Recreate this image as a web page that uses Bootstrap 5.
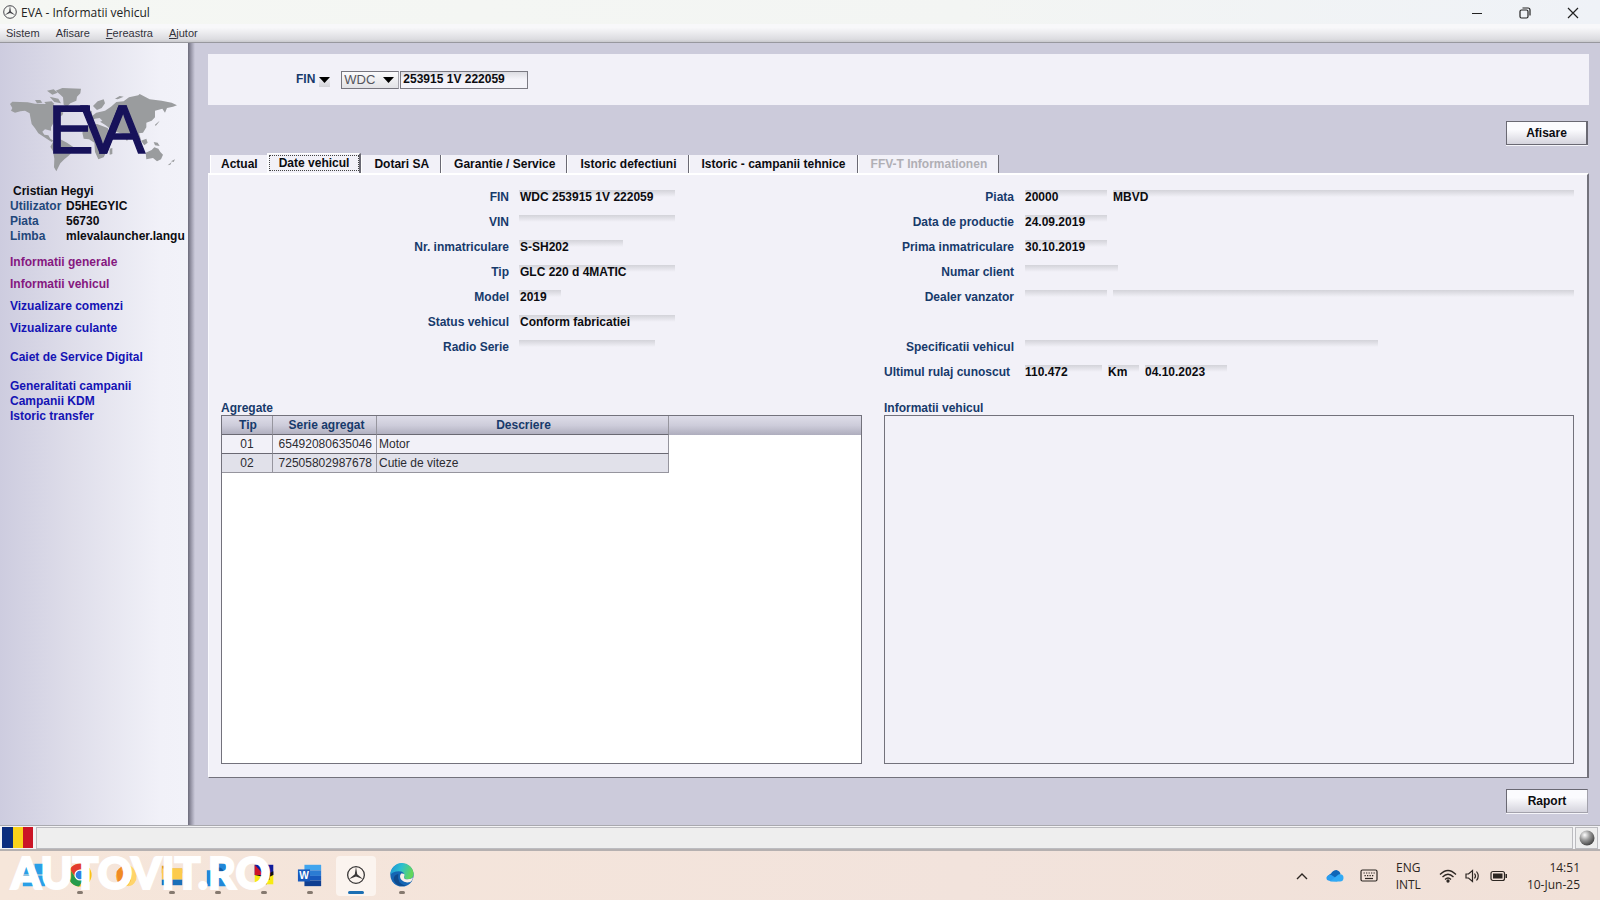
<!DOCTYPE html>
<html lang="ro">
<head>
<meta charset="utf-8">
<meta name="viewport" content="width=device-width, initial-scale=1">
<title>EVA - Informatii vehicul</title>
<link href="https://cdn.jsdelivr.net/npm/bootstrap@5.3.0/dist/css/bootstrap.min.css" rel="stylesheet">
<style>
  :root { --navy:#173a6b; --panel:#f2f1f8; --lilac:#cccbdb; --edge:#73727c; }
  body { font-family:"Liberation Sans",Arial,sans-serif; font-size:12px; line-height:15px; color:#0c0c10; background:var(--lilac); }
  button, input, select { font-family:inherit; font-size:12px; color:inherit; border-radius:0; }
  .ui-font { font-family:"Open Sans","Noto Sans",sans-serif; }

  .title-bar { height:24px; background:linear-gradient(90deg,#f5f7f3,#f3f5f3 60%,#eff2f7); padding-left:3px; color:#222; }
  .win-btn { width:48px; height:24px; border:0; background:none; padding:0; }
  .menu-bar { height:19px; padding-left:6px; gap:16px; background:linear-gradient(#f8f8fa 20%,#dcdce0 85%,#c9c9cd); border-bottom:1px solid #98989e; }
  .menu-bar button { border:0; background:none; padding:0; font-size:11px; line-height:19px; color:#33333b; }

  .side-bar { width:188px; background:linear-gradient(90deg,#cdccdf,#dddce9 35%,#f1f1f8 85%,#f2f2f9); overflow:hidden; }
  .side-edge { width:7px; background:linear-gradient(90deg,#6c6b7b,#a7a6b7 60%,#cccbdb); }
  .world { display:block; margin:37px 0 4px 5px; }
  .user-info { display:grid; grid-template-columns:56px 1fr; padding-left:10px; font-weight:bold; white-space:nowrap; }
  .user-info dt, .user-info dd { margin:0; font-weight:bold; }
  .user-info dt { color:#23477a; }
  .user-name { grid-column:1 / -1; padding-left:3px; }
  .side-links { padding:11px 0 0 10px; font-weight:bold; }
  .side-links a { color:#1413b4; text-decoration:none; display:block; }
  .side-links a.seen { color:#85187f; }
  .g7 { margin-top:7px; } .g14 { margin-top:14px; }

  .work { padding:11px 11px 12px 13px; min-width:0; }
  .search { height:51px; background:var(--panel); padding-left:88px; }
  .search label, .lbl, .box-title, .grid-table th { color:var(--navy); font-weight:bold; }
  .drop { border:0; padding:0; width:11px; height:14px; background:linear-gradient(#f2f1f8 30%,#d3d3d8); }
  .drop svg, .combo svg { display:block; }
  .combo { width:58px; height:18px; position:relative; margin:0 1px 0 11px; }
  .combo select { appearance:none; width:100%; height:100%; padding:0 0 0 2px; font-size:13px; line-height:15px; color:#55555d; border:1px solid #77767f; border-right-color:#a5a5ad; background:linear-gradient(#fafafc,#e2e2e6); }
  .combo svg { position:absolute; right:5px; top:6px; pointer-events:none; }
  .fin-input { width:128px; height:18px; padding:0 2px 1px; font-weight:bold; border:1px solid #7b7a83; background:linear-gradient(#dcdce2,#f4f3f9 45%); }
  .eva-btn { width:82px; height:24px; margin-right:1px; font-weight:bold; border:1px solid #6a6973; border-right-width:2px; background:linear-gradient(#fbfbfe 35%,#d5d4dd); box-shadow:0 1px 0 #f5f5fa; padding:0; }
  .flat-btn { border-right-width:1px; border-color:#6a6973 #a3a2ac #a3a2ac #6a6973; }

  .eva-tabs { height:20px; padding-left:2px; }
  .eva-tabs button { height:18px; line-height:18px; padding:0 11px 0 12px; border:0; border-right:1px solid #6a6973; border-left:1px solid #fff; background:var(--panel); font-weight:bold; white-space:nowrap; }
  .eva-tabs button.picked { height:20px; padding:0 10px 1px 10px; border-right:2px solid #6a6973; border-left:2px solid #fbfbfe; border-top:1px solid #fff; line-height:16px; outline:1px dotted #444; outline-offset:-3px; position:relative; }
  .eva-tabs button.before { border-right:0; padding:0 9px 0 10px; }
  .eva-tabs button:disabled { color:#b0afb5; }

  .sheet { background:var(--panel); border-top:2px solid #fff; border-left:1px solid #fafafe; border-right:2px solid var(--edge); border-bottom:1px solid var(--edge); padding:15px 13px 13px 12px; }
  .halves { display:grid; grid-template-columns:641fr 690fr; column-gap:22px; }
  .field-area { min-height:211px; }
  .f-row { display:flex; height:25px; align-items:flex-start; }
  .f-row .lbl { text-align:right; line-height:14px; white-space:nowrap; margin-right:10px; flex:none; }
  .left-fields .lbl { width:288px; }
  .right-fields .lbl { width:130px; margin-right:11px; }
  .f-row .shift-lbl { width:126px; margin-right:15px; }
  .f-row input { height:14px; line-height:14px; border:0; padding:0 1px; font-weight:bold; background:linear-gradient(#d3d3d9,#f2f1f8 7px); min-width:0; outline:0; }
  .f-row .w-code, .f-row .w-km, .f-row .w-unit, .f-row .w-name { padding:0; }
  .w-full { width:156px; } .w-plate { width:104px; } .w-year { width:42px; } .w-radio { width:136px; }
  .w-code { width:82px; } .w-client { width:93px; } .w-spec { width:353px; } .w-km { width:77px; } .w-unit { width:31px; }
  .gap-in { gap:6px; } .f-row.gap-in .lbl { margin-right:5px; } .f-row.gap-in .shift-lbl { margin-right:9px; }
  .box-title { height:14px; line-height:14px; }
  .list-box { background:#fff; border:1px solid var(--edge); }
  .info-box { background:var(--panel); border:1px solid var(--edge); border-radius:0; resize:none; display:block; width:100%; }
  .head-band { background:linear-gradient(#deddE9,#cdccda 50%,#aeadbd); height:19px; }
  .grid-table { border-collapse:separate; border-spacing:0; width:447px; table-layout:fixed; }
  .grid-table th, .grid-table td { height:19px; line-height:16px; padding:0 2px; border-right:1px solid #96959e; border-bottom:1px solid #6a6973; white-space:nowrap; }
  .grid-table th { text-align:center; line-height:18px; padding-left:4px; }
  .grid-table th:nth-child(2) { padding-left:6px; }
  .grid-table td { background:var(--panel); color:#2b2b31; }
  .grid-table tr:nth-child(2) td { background:#e1e1ea; border-bottom-color:#96959e; }

  .status { height:26px; background:#f3f3f5; border-top:1px solid #a9a9af; border-bottom:2px solid #b5b0b0; padding:1px 2px 1px 2px; }
  .cell { background:#eee; border:1px solid #bcbcc0; height:22px; }
  .task-bar { height:49px; background:linear-gradient(90deg,#f6e6da,#f2e3dc 60%,#f1e1d8); position:relative; color:#2c2622; }
  .apps { padding-left:14px; gap:6px; }
  .app { width:40px; height:40px; border:0; border-radius:4px; background:none; padding:6px 0 0; display:flex; flex-direction:column; align-items:center; gap:3px; }
  .app.on { background:#fbf4ef; }
  .app i { width:6px; height:3px; border-radius:2px; background:#85796f; }
  .app.on i { width:16px; background:#1b6fb3; }
  .app svg { width:26px; height:26px; display:block; }
  .stamp { position:absolute; left:11px; top:0; font:900 43px/44px Lato,sans-serif; color:#fff; -webkit-text-stroke:2px #fff; white-space:nowrap; pointer-events:none; }
  .tray { padding-right:20px; line-height:17px; }
</style>
</head>
<body class="d-flex flex-column min-vh-100">

<svg width="0" height="0" class="position-absolute" aria-hidden="true">
  <symbol id="star" viewBox="0 0 20 20">
    <circle cx="10" cy="10" r="9" fill="none" stroke="currentColor" stroke-width="1.4"/>
    <path d="M10 1 11.3 9.2 17.8 14.5 10 11.5 2.2 14.5 8.7 9.2Z" fill="currentColor"/>
  </symbol>
</svg>

<header>
  <div class="title-bar d-flex align-items-center ui-font">
    <svg width="14" height="14" color="#44444a"><use href="#star"/></svg>
    <span class="ms-1">EVA - Informatii vehicul</span>
    <div class="ms-auto d-flex">
      <button class="win-btn" aria-label="Minimizare"><svg width="12" height="12"><path d="M1 6.5H11" stroke="#222"/></svg></button>
      <button class="win-btn" aria-label="Restaurare"><svg width="12" height="12" fill="none" stroke="#222" stroke-width="1.2"><rect x="1" y="3" width="8" height="8" rx="1.5"/><path d="M3.5 1H9q2 0 2 2V8.500"/></svg></button>
      <button class="win-btn" style="margin-right:3px" aria-label="Inchidere"><svg width="12" height="12"><path d="M1 1 11 11M11 1 1 11" stroke="#222" stroke-width="1.2"/></svg></button>
    </div>
  </div>
  <nav class="menu-bar d-flex">
    <button>Sistem</button><button>Afisare</button><button><u>F</u>ereastra</button><button><u>A</u>jutor</button>
  </nav>
</header>

<div class="d-flex flex-grow-1">
  <aside class="side-bar flex-shrink-0">
    <svg class="world" width="180" height="100" viewBox="0 0 540 300" role="img" aria-label="EVA">
      <g fill="#9a9c9e">
        <path d="M15 72 22 65 68 67 90 71 120 72 145 72 152 84 175 98 172 106 160 112 158 122 146 128 138 142 138 152 120 148 112 155 118 164 130 166 136 176 146 182 140 186 118 172 100 160 90 145 80 132 76 112 74 100 60 92 46 94 30 98 18 92 22 84Z"/>
        <path d="M90 60 106 60 112 68 96 70ZM118 66 140 64 148 72 124 74ZM126 32 146 28 158 38 142 44ZM134 50 160 56 168 70 148 66Z"/>
        <path d="M152 32 172 24 228 26 226 40 216 50 214 62 196 70 186 80 176 74 174 52 166 44Z"/>
        <path d="M146 182 166 178 186 188 206 202 202 216 190 228 178 238 166 250 160 262 154 274 147 262 148 236 144 214 136 200Z"/>
        <path d="M264 78 278 64 296 58 300 70 290 84 276 90 272 86ZM250 98 260 92 262 108 252 108Z"/>
        <path d="M256 112 274 98 300 92 318 80 334 66 356 64 372 52 400 46 404 42 434 58 470 62 500 68 516 76 504 80 486 84 480 98 472 86 450 92 450 112 440 122 424 128 424 142 414 158 402 160 408 180 396 174 388 154 374 164 366 184 354 162 334 156 324 164 310 142 300 134 280 122 262 134 252 132Z"/>
        <path d="M244 138 276 132 308 144 316 164 328 170 314 190 306 212 296 232 280 238 270 216 268 188 252 178 236 176 232 158ZM314 206 322 204 322 222 314 224Z"/>
        <path d="M330 56 344 48 356 50 338 58ZM446 186 458 188 464 198 450 196ZM408 182 424 176 428 188 418 196ZM450 134 464 122 460 128 452 138Z"/>
        <path d="M422 218 440 210 448 202 460 206 466 216 474 224 468 238 456 244 444 234 424 238ZM498 244 510 238 506 246ZM488 256 500 246 496 254Z"/>
      </g>
      <path d="M256 124 270 116 284 114 292 122 276 130 256 134Z" fill="#dddde8"/>
      <text x="130 227 284" y="218" font-family="Liberation Sans,Arial,sans-serif" font-size="204" fill="#17125a" stroke="#17125a" stroke-width="4">EVA</text>
    </svg>
    <dl class="user-info mb-0">
      <dd class="user-name">Cristian Hegyi</dd>
      <dt>Utilizator</dt><dd>D5HEGYIC</dd>
      <dt>Piata</dt><dd>56730</dd>
      <dt>Limba</dt><dd>mlevalauncher.langu</dd>
    </dl>
    <nav class="side-links">
      <a class="seen" href="#">Informatii generale</a>
      <a class="seen g7" href="#">Informatii vehicul</a>
      <a class="g7" href="#">Vizualizare comenzi</a>
      <a class="g7" href="#">Vizualizare culante</a>
      <a class="g14" href="#">Caiet de Service Digital</a>
      <a class="g14" href="#">Generalitati campanii</a>
      <a href="#">Campanii KDM</a>
      <a href="#">Istoric transfer</a>
    </nav>
  </aside>
  <div class="side-edge flex-shrink-0"></div>

  <main class="work flex-grow-1 d-flex flex-column">
    <form class="search d-flex align-items-center" onsubmit="return false">
      <label for="fin">FIN</label>
      <button class="drop ms-1" type="button" aria-label="Tip cautare"><svg width="11" height="14"><path d="M0 4H11L5.500 10Z"/></svg></button>
      <span class="combo"><select aria-label="WMI"><option>WDC</option></select><svg width="11" height="6"><path d="M0 0H11L5.500 6Z"/></svg></span>
      <input class="fin-input" id="fin" value="253915 1V 222059">
    </form>
    <div class="d-flex justify-content-end mt-3 mb-2"><button class="eva-btn">Afisare</button></div>

    <div class="eva-tabs d-flex align-items-end" role="tablist">
      <button class="before" role="tab">Actual</button>
      <button class="picked" role="tab" aria-selected="true">Date vehicul</button>
      <button role="tab">Dotari SA</button>
      <button role="tab">Garantie / Service</button>
      <button role="tab">Istoric defectiuni</button>
      <button role="tab">Istoric - campanii tehnice</button>
      <button role="tab" disabled>FFV-T Informationen</button>
    </div>

    <section class="sheet flex-grow-1 d-flex flex-column">
      <div class="halves field-area">
        <div class="left-fields">
          <div class="f-row"><label class="lbl" for="a1">FIN</label><input id="a1" class="w-full" readonly value="WDC 253915 1V 222059"></div>
          <div class="f-row"><label class="lbl" for="a2">VIN</label><input id="a2" class="w-full" readonly></div>
          <div class="f-row"><label class="lbl" for="a3">Nr. inmatriculare</label><input id="a3" class="w-plate" readonly value="S-SH202"></div>
          <div class="f-row"><label class="lbl" for="a4">Tip</label><input id="a4" class="w-full" readonly value="GLC 220 d 4MATIC"></div>
          <div class="f-row"><label class="lbl" for="a5">Model</label><input id="a5" class="w-year" readonly value="2019"></div>
          <div class="f-row"><label class="lbl" for="a6">Status vehicul</label><input id="a6" class="w-full" readonly value="Conform fabricatiei"></div>
          <div class="f-row"><label class="lbl" for="a7">Radio Serie</label><input id="a7" class="w-radio" readonly></div>
        </div>
        <div class="right-fields">
          <div class="f-row gap-in"><label class="lbl" for="b1">Piata</label><input id="b1" class="w-code" readonly value="20000"><input class="w-name flex-grow-1" aria-label="Nume piata" readonly value="MBVD"></div>
          <div class="f-row"><label class="lbl" for="b2">Data de productie</label><input id="b2" class="w-code" readonly value="24.09.2019"></div>
          <div class="f-row"><label class="lbl" for="b3">Prima inmatriculare</label><input id="b3" class="w-code" readonly value="30.10.2019"></div>
          <div class="f-row"><label class="lbl" for="b4">Numar client</label><input id="b4" class="w-client" readonly></div>
          <div class="f-row gap-in"><label class="lbl" for="b5">Dealer vanzator</label><input id="b5" class="w-code" readonly><input class="w-name flex-grow-1" aria-label="Nume dealer" readonly></div>
          <div class="f-row"></div>
          <div class="f-row"><label class="lbl" for="b6">Specificatii vehicul</label><input id="b6" class="w-spec" readonly></div>
          <div class="f-row gap-in"><label class="lbl shift-lbl" for="b7">Ultimul rulaj cunoscut</label><input id="b7" class="w-km" readonly value="110.472"><input class="w-unit" aria-label="Unitate" readonly value="Km"><input class="w-code" aria-label="Data rulaj" readonly value="04.10.2023"></div>
        </div>
      </div>
      <div class="halves flex-grow-1">
        <div class="d-flex flex-column">
          <div class="box-title">Agregate</div>
          <div class="list-box flex-grow-1">
            <div class="head-band">
              <table class="grid-table">
                <colgroup><col style="width:51px"><col style="width:104px"><col></colgroup>
                <thead><tr><th>Tip</th><th>Serie agregat</th><th>Descriere</th></tr></thead>
                <tbody>
                  <tr><td class="text-center">01</td><td class="text-end pe-1">65492080635046</td><td>Motor</td></tr>
                  <tr><td class="text-center">02</td><td class="text-end pe-1">72505802987678</td><td>Cutie de viteze</td></tr>
                </tbody>
              </table>
            </div>
          </div>
        </div>
        <div class="d-flex flex-column">
          <label class="box-title" for="info">Informatii vehicul</label>
          <textarea class="info-box flex-grow-1" id="info" readonly></textarea>
        </div>
      </div>
    </section>
    <div class="d-flex justify-content-end" style="margin-top:11px"><button class="eva-btn flat-btn">Raport</button></div>
  </main>
</div>

<footer>
  <div class="status d-flex align-items-center">
    <svg width="31" height="21" aria-label="Romania"><path fill="#0b2d7e" d="M0 0h11v21H0z"/><path fill="#f9d21b" d="M11 0h10v21H11z"/><path fill="#cb1526" d="M21 0h10v21H21z"/></svg>
    <div class="cell flex-grow-1" style="margin-left:3px"></div>
    <div class="cell d-flex align-items-center justify-content-center" style="width:23px;margin-left:2px">
      <svg width="16" height="16"><defs><radialGradient id="ball" cx=".35" cy=".3" r=".7"><stop offset="0" stop-color="#fff"/><stop offset=".5" stop-color="#999"/><stop offset="1" stop-color="#4a4a4a"/></radialGradient></defs><circle cx="8" cy="8" r="7.500" fill="url(#ball)"/></svg>
    </div>
  </div>
  <div class="task-bar d-flex align-items-center">
    <div class="apps d-flex">
      <button class="app" aria-label="Start"><svg viewBox="0 0 28 28"><path fill="#2a9fe6" d="M2 2h11.500v11.500H2zM14.500 2H26v11.500H14.500zM2 14.500h11.500V26H2zM14.500 14.500H26V26H14.500z"/></svg></button>
      <button class="app" aria-label="Chrome"><svg viewBox="0 0 28 28"><circle cx="14" cy="14" r="12.500" fill="#fbc116"/><path fill="#e33b2e" d="M3.200 7.700A12.500 12.500 0 0 1 24.800 7.700H14L8 15Z"/><path fill="#259b4b" d="M3.200 7.700A12.500 12.500 0 0 0 13 26.500L18.500 17.500 9 17Z"/><circle cx="14" cy="14" r="6" fill="#fff"/><circle cx="14" cy="14" r="4.700" fill="#2f7de1"/></svg><i></i></button>
      <button class="app" aria-label="Navigator"><svg viewBox="0 0 28 28"><circle cx="14" cy="15" r="11" fill="#fcb53b"/><path fill="#f08b23" d="M4 10 10 4 9 9 16 11 20 20 12 25 5 21Z"/><path fill="#ffd46a" d="M17 3Q27 8 25 19 22 26 16 26 24 16 17 3Z"/></svg></button>
      <button class="app" aria-label="Explorator"><svg viewBox="0 0 28 28"><path fill="#e6a41b" d="M3 4h8l3 3h11v5H3z"/><path fill="#fccb4c" d="M3 7h22v12H3z"/><path fill="#1a6fb8" d="M3 19h22v6H3z"/></svg><i></i></button>
      <button class="app" aria-label="Aplicatie"><svg viewBox="0 0 28 28"><path fill="#2187d8" d="M2 9h5V2h16v10h3v14H2z"/><circle cx="15" cy="11" r="5" fill="#125da8"/></svg><i></i></button>
      <button class="app" aria-label="Diagnoza"><svg viewBox="0 0 28 28"><path fill="#101d9c" d="M4 3h20v11H4z"/><path fill="#f7ea12" d="M4 14h20v10H4z"/><path fill="#cf1526" d="M4 3 14 14 4 14Z"/><path d="M13 15h7v4h-3v5h-4zM4 14h12l8-4v4l-6 3z" fill="#111"/></svg><i></i></button>
      <button class="app" aria-label="Word"><svg viewBox="0 0 28 28"><path fill="#41a5ee" d="M8 3h18v6H8z"/><path fill="#2b7cd3" d="M8 9h18v6H8z"/><path fill="#185abd" d="M8 15h18v5H8z"/><path fill="#103f91" d="M8 20h18v6H8z"/><path fill="#185abd" d="M1 8h13v13H1z"/><text x="7.500" y="18.500" font-size="11" font-weight="bold" fill="#fff" text-anchor="middle">W</text></svg><i></i></button>
      <button class="app on" aria-label="EVA"><svg viewBox="0 0 28 28" color="#3a3838"><use href="#star" x="4" y="4" width="20" height="20"/></svg><i></i></button>
      <button class="app" aria-label="Edge"><svg viewBox="0 0 28 28"><defs><linearGradient id="e1" x1="0" y1="0" x2="1" y2=".3"><stop offset="0" stop-color="#1c8fd6"/><stop offset=".5" stop-color="#2cbfd0"/><stop offset="1" stop-color="#62d65c"/></linearGradient></defs><circle cx="14" cy="14" r="12.500" fill="#1566b4"/><path fill="url(#e1)" d="M1.500 14A12.500 12.500 0 0 1 26.500 13Q26.500 18.500 20 18.500 15.500 18.500 16.500 15.500 17 10 10.500 10 4 10 1.500 14Z"/><path fill="#0f4a8c" d="M10 13Q8 23 18 25.800 8 27 5 19 5 14 10 13Z"/><path fill="#f8efe8" d="M13 12.500Q18 12 16.300 15.500 15.500 18.500 20 18.700 24 18.700 26 16.500 25.500 20 23 21.500 17 23 13.500 19.500 10.500 16 13 12.500Z"/></svg><i></i></button>
    </div>
    <div class="tray ui-font ms-auto d-flex align-items-center">
      <svg width="12" height="8" fill="none" stroke="#2c2622" stroke-width="1.400"><path d="M1 7 6 2 11 7"/></svg>
      <svg style="margin-left:18px" width="18" height="13" viewBox="0 0 18 13"><path fill="#0f66b8" d="M5 11 2 7Q4 4.500 5 4.500 7 1 10.500 1 14 2 14.500 5L10 9Z"/><path fill="#2a9df0" d="M4 12Q0 11.500 .5 8.500 1.500 5.500 5 5.800L13 11 11 12.500Z"/><path fill="#31aaf5" d="M4 12.500 12.500 5.500Q17.500 4.500 17.500 9 17.300 12.500 14 12.500Z"/></svg>
      <svg style="margin-left:16px" width="18" height="14" viewBox="0 0 18 14" fill="none" stroke="#2c2622" stroke-width="1.200"><rect x="1" y="1" width="16" height="11" rx="1.500"/><path d="M3.500 4H15M4.500 6.700H14" stroke-dasharray="1.300 1.200"/><path d="M5 9.500H13"/></svg>
      <div class="text-center" style="margin-left:18px">ENG<br>INTL</div>
      <svg style="margin-left:18px" width="18" height="14" viewBox="0 0 18 14" fill="none" stroke="#2c2622" stroke-width="1.300"><path d="M1 5.500Q9-2.500 17 5.500M3.500 8Q9 2.500 14.500 8M6 10.500Q9 7.500 12 10.500"/><circle cx="9" cy="12" r="1" fill="#2c2622"/></svg>
      <svg class="ms-2" width="16" height="14" viewBox="0 0 16 14" fill="none" stroke="#2c2622" stroke-width="1.200"><path d="M1 5H3.500L7.500 1.500V12.500L3.500 9H1ZM9.500 4.500Q11.500 7 9.500 9.500M11.500 2.500Q15 7 11.500 11.500"/></svg>
      <svg style="margin-left:9px" width="18" height="12" viewBox="0 0 18 12"><rect x="1" y="1.500" width="13.500" height="9" rx="2" fill="none" stroke="#2c2622" stroke-width="1.200"/><path fill="#2c2622" d="M3 3.500h9.500v5H3zM15.500 4h1.500v4h-1.500z"/></svg>
      <div class="text-end" style="margin-left:19px">14:51<br>10-Jun-25</div>
    </div>
    <div class="stamp">AUTOVIT.RO</div>
  </div>
</footer>

<script src="https://cdn.jsdelivr.net/npm/bootstrap@5.3.0/dist/js/bootstrap.bundle.min.js"></script>
</body>
</html>
